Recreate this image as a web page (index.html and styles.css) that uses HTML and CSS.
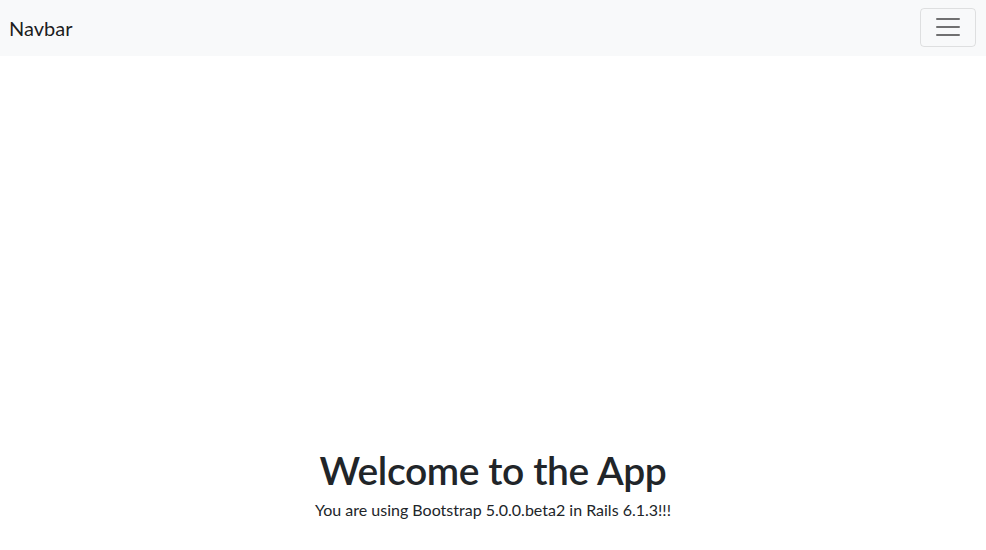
FILE: index.html
```html
<!DOCTYPE html>
<html lang="en">
<head>
<meta charset="utf-8">
<title>App</title>
<link rel="stylesheet" href="styles.css">
</head>
<body>
<nav class="navbar">
  <a class="brand" href="#">Navbar</a>
  <button class="toggler" type="button" aria-label="Toggle navigation">
    <svg class="toggler-icon" viewBox="0 0 30 30" width="30" height="30">
      <path d="M4 7h22M4 15h22M4 23h22" stroke="rgba(0,0,0,0.55)" stroke-width="2" stroke-linecap="round" fill="none"/>
    </svg>
  </button>
</nav>
<main class="content">
  <h1 class="title">Welcome to the App</h1>
  <p class="lead-text">You are using Bootstrap 5.0.0.beta2 in Rails 6.1.3!!!</p>
</main>
</body>
</html>
```
FILE: styles.css
```css
html, body {
  margin: 0;
  padding: 0;
}
body {
  font-family: Lato, "Noto Sans", sans-serif;
  color: #212529;
  background: #fff;
  font-size: 16px;
  line-height: 1.5;
}
.navbar {
  height: 56px;
  box-sizing: border-box;
  background: #f8f9fa;
  display: flex;
  align-items: center;
  justify-content: space-between;
  padding: 0 10px 0 9px;
}
.brand {
  font-size: 20px;
  color: rgba(0,0,0,0.9);
  text-decoration: none;
}
.toggler {
  width: 56px;
  height: 39px;
  margin-top: -2px;
  display: flex;
  align-items: center;
  justify-content: center;
  padding: 0;
  background: transparent;
  border: 1px solid rgba(0,0,0,0.1);
  border-radius: 4px;
}
.toggler-icon {
  display: block;
}
.content {
  padding-top: 391px;
  text-align: center;
}
.title {
  margin: 0 0 5px;
  font-size: 39px;
  font-weight: 600;
  line-height: 46px;
  letter-spacing: -0.4px;
}
.lead-text {
  margin: 0;
}
```
